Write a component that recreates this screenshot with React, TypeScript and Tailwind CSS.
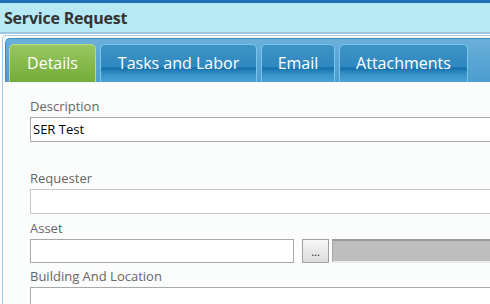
import React from "react";

const font = { fontFamily: '"Open Sans", "Noto Sans", sans-serif' };

function Tab({ label, w, active }: { label: string; w: string; active?: boolean }) {
  return (
    <div
      className={
        "h-[38px] shrink-0 rounded-t-[5px] border border-b-0 flex items-center justify-center text-white text-[16px] pb-[2px] " +
        w +
        (active
          ? " border-[#b7dc84] bg-[linear-gradient(to_bottom,#98c764_0%,#86ba4c_50%,#74ac3a_100%)]"
          : " border-[#78c6ec] bg-[linear-gradient(to_bottom,#3e93c4_0%,#2f88bf_58%,#1470ac_62%,#3893c8_80%,#4ba1d2_100%)]")
      }
    >
      {label}
    </div>
  );
}

export default function App() {
  return (
    <div className="w-[490px] h-[304px] overflow-hidden bg-white flex flex-col" style={font}>
      <div className="h-[3px] bg-[#1f6fb2] shrink-0" />
      <div className="h-[31px] shrink-0 bg-[#b6e9f4] border-b-2 border-[#a3c6e0] flex items-center pl-[4px]">
        <span className="text-[16px] font-bold text-[#333333] tracking-[-0.2px]">Service Request</span>
      </div>
      <div className="flex-1 ml-[2px] mt-[1px] border-l border-t border-[#a9c9e2] rounded-tl-[4px] bg-[#fbfcfc] pl-[2px] pt-[2px]">
        <div className="h-[44px] rounded-tl-[5px] border-l border-t border-[#3d8cc4] bg-[linear-gradient(to_bottom,#6bb0da_0%,#5aa5d4_50%,#4d9dcf_100%)] flex items-end gap-[4px] pl-[3px]">
          <Tab label="Details" w="w-[87px]" active />
          <Tab label="Tasks and Labor" w="w-[157px]" />
          <Tab label="Email" w="w-[74px]" />
          <Tab label="Attachments" w="w-[129px]" />
        </div>
        <div className="pl-[25px] pt-[16px] text-[13px]">
          <div className="text-[#666666] leading-[16px] h-[19px]">Description</div>
          <div className="h-[25px] w-[480px] border border-[#a9a9a9] bg-white flex items-center pl-[2px] text-black">SER Test</div>
          <div className="text-[#666666] leading-[16px] h-[19px] mt-[28px]">Requester</div>
          <div className="h-[25px] w-[480px] border border-[#c8c8c8] bg-white" />
          <div className="text-[#666666] leading-[16px] h-[19px] mt-[6px]">Asset</div>
          <div className="flex items-center h-[24px]">
            <div className="h-[24px] w-[264px] shrink-0 border border-[#a9a9a9] bg-white" />
            <div className="ml-[8px] h-[24px] w-[27px] shrink-0 border border-[#a0a0a0] bg-[linear-gradient(to_bottom,#f7f7f7,#dcdcdc)] flex items-center justify-center text-[11px] text-[#222] leading-none">...</div>
            <div className="ml-[3px] h-[24px] w-[200px] shrink-0 bg-[#bebebe] border-t-2 border-l border-b-2 border-t-[#999999] border-l-[#aaaaaa] border-b-[#ececec]" />
          </div>
          <div className="text-[#666666] leading-[16px] h-[19px] mt-[5px]">Building And Location</div>
          <div className="h-[25px] w-[480px] border border-[#a9a9a9] bg-white" />
        </div>
      </div>
    </div>
  );
}
